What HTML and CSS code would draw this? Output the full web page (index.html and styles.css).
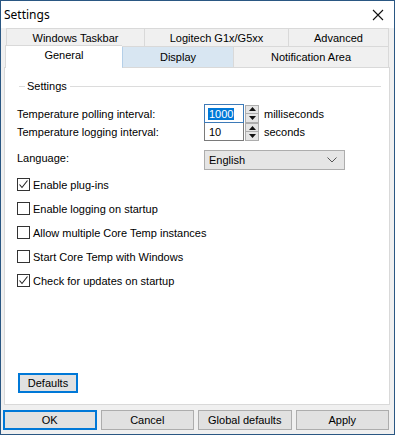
FILE: index.html
```html
<!DOCTYPE html>
<html>
<head>
<meta charset="utf-8">
<link rel="stylesheet" href="styles.css">
</head>
<body>
<div class="window">
  <div class="titlebar">
    <span class="title">Settings</span>
    <svg class="close" width="12" height="12" viewBox="0 0 12 12"><path d="M1 1 L11 11 M11 1 L1 11" stroke="#111" stroke-width="1.1" fill="none"/></svg>
  </div>
  <div class="tabs">
    <div class="tabrow row1">
      <div class="tab w1">Windows Taskbar</div>
      <div class="tab w2">Logitech G1x/G5xx</div>
      <div class="tab w3">Advanced</div>
    </div>
    <div class="tabrow row2">
      <div class="tab sel w4">General</div>
      <div class="tab hover w5">Display</div>
      <div class="tab w6">Notification Area</div>
    </div>
  </div>
  <div class="panel">
    <div class="group"><span class="gl-short"></span><span class="gl-text">Settings</span><span class="gl-long"></span></div>
    <div class="field first">
      <span class="flabel">Temperature polling interval:</span>
      <span class="edit focus"><span class="selected">1000</span></span>
      <span class="spin"><span class="sb"><svg width="7" height="4" viewBox="0 0 7 4"><path d="M0 4 L3.5 0 L7 4Z" fill="#111"/></svg></span><span class="sb"><svg width="7" height="4" viewBox="0 0 7 4"><path d="M0 0 L3.5 4 L7 0Z" fill="#111"/></svg></span></span>
      <span class="unit">milliseconds</span>
    </div>
    <div class="field second">
      <span class="flabel">Temperature logging interval:</span>
      <span class="edit">10</span>
      <span class="spin"><span class="sb"><svg width="7" height="4" viewBox="0 0 7 4"><path d="M0 4 L3.5 0 L7 4Z" fill="#111"/></svg></span><span class="sb"><svg width="7" height="4" viewBox="0 0 7 4"><path d="M0 0 L3.5 4 L7 0Z" fill="#111"/></svg></span></span>
      <span class="unit">seconds</span>
    </div>
    <div class="field lang">
      <span class="flabel">Language:</span>
      <span class="combo"><span>English</span><svg width="10" height="6" viewBox="0 0 10 6"><path d="M0.5 0.5 L5 5 L9.5 0.5" stroke="#555" stroke-width="1" fill="none"/></svg></span>
    </div>
    <div class="checks">
      <div class="check"><span class="box"><svg width="11" height="11" viewBox="0 0 11 11"><path d="M1.5 5.5 L4 8.5 L9.5 1.5" stroke="#222" stroke-width="1.1" fill="none"/></svg></span><span>Enable plug-ins</span></div>
      <div class="check"><span class="box"></span><span>Enable logging on startup</span></div>
      <div class="check"><span class="box"></span><span>Allow multiple Core Temp instances</span></div>
      <div class="check"><span class="box"></span><span>Start Core Temp with Windows</span></div>
      <div class="check"><span class="box"><svg width="11" height="11" viewBox="0 0 11 11"><path d="M1.5 5.5 L4 8.5 L9.5 1.5" stroke="#222" stroke-width="1.1" fill="none"/></svg></span><span>Check for updates on startup</span></div>
    </div>
    <div class="btn defaults focusbtn">Defaults</div>
  </div>
  <div class="buttons">
    <div class="btn focusbtn">OK</div>
    <div class="btn">Cancel</div>
    <div class="btn">Global defaults</div>
    <div class="btn">Apply</div>
  </div>
</div>
</body>
</html>
```

FILE: styles.css
```css
* { box-sizing: border-box; }
html, body { margin: 0; padding: 0; }
body {
  width: 395px;
  height: 435px;
  font-family: "Liberation Sans", Arial, sans-serif;
  font-size: 11px;
  color: #000;
}
.window {
  width: 395px;
  height: 435px;
  border: 1px solid #2a5783;
  background: #f0f0f0;
  display: flex;
  flex-direction: column;
}
.titlebar {
  height: 27px;
  background: #fff;
  display: flex;
  align-items: center;
  justify-content: space-between;
  padding: 0 10px 0 3px;
}
.title {
  font-family: "Noto Sans", "Open Sans", sans-serif;
  font-size: 12px;
  margin-top: -1px;
}
.close { margin-top: 1px; }
.tabs {
  padding: 0 5px 0 4px;
  position: relative;
  z-index: 2;
  margin-bottom: -1px;
}
.tabrow { display: flex; }
.row1 { height: 19px; }
.row2 { height: 21px; align-items: flex-end; }
.tab {
  height: 19px;
  border: 1px solid #d9d9d9;
  border-right: none;
  background: #f0f0f0;
  display: flex;
  align-items: center;
  justify-content: center;
  padding-top: 1px;
}
.tab:last-child { border-right: 1px solid #d9d9d9; }
.row2 .tab { height: 21px; border-top: none; padding-top: 0; padding-bottom: 1px; }
.w1 { width: 138px; margin-left: 1px; }
.w2 { width: 144px; }
.w3 { width: 101px; }
.w4 { width: 117px; }
.w5 { width: 111px; }
.w6 { width: 156px; }
.row2 .tab.sel {
  background: #fff;
  height: 23px;
  margin-top: -2px;
  border: 1px solid #d9d9d9;
  border-bottom: none;
  border-right: none;
  padding-bottom: 4px;
}
.row2 .tab.hover {
  background: #d8e6f2;
  border-left: 1px solid #b4cfe8;
}
.panel {
  height: 338px;
  margin: 0 4px 0 3px;
  background: #fff;
  border: 1px solid #d9d9d9;
  display: flex;
  flex-direction: column;
}
.group {
  margin: 11px 8px 0 14px;
  height: 14px;
  display: flex;
  align-items: center;
}
.gl-short { width: 6px; height: 1px; background: #dcdcdc; }
.gl-long { flex: 1; height: 1px; background: #dcdcdc; }
.gl-text { padding: 0 3px 0 2px; }
.field {
  display: flex;
  align-items: center;
  padding-left: 12px;
}
.flabel { width: 187px; }
.field.first { margin-top: 11px; height: 19px; }
.field.second { height: 18px; }
.edit {
  width: 40px;
  height: 19px;
  border: 1px solid #7a7a7a;
  display: flex;
  align-items: center;
  padding-left: 4px;
}
.edit.focus { border-color: #3d7ab8; }
.second .edit { border-top: none; height: 18px; }
.selected {
  background: #0078d7;
  color: #fff;
  padding: 0 1px;
  margin-left: -1px;
  line-height: 12px;
}
.spin {
  display: flex;
  flex-direction: column;
  margin-left: 1px;
  width: 14px;
}
.sb {
  width: 14px;
  height: 9px;
  border: 1px solid #adadad;
  background: #e5e5e5;
  display: flex;
  align-items: center;
  justify-content: center;
}
.sb + .sb { border-top: none; height: 9px; }
.unit { margin-left: 5px; }
.field.lang { margin-top: 9px; height: 20px; }
.lang .flabel { margin-top: -4px; }
.combo {
  width: 141px;
  height: 20px;
  background: #e5e5e5;
  border: 1px solid #adadad;
  display: flex;
  align-items: center;
  justify-content: space-between;
  padding: 0 7px 0 4px;
}
.checks {
  margin-top: 8px;
  padding-left: 12px;
  display: flex;
  flex-direction: column;
  gap: 11px;
}
.check {
  display: flex;
  align-items: center;
  height: 13px;
}
.box {
  width: 13px;
  height: 13px;
  border: 1px solid #333;
  background: #fff;
  margin-right: 3px;
  display: flex;
  align-items: center;
  justify-content: center;
}
.btn {
  background: #e1e1e1;
  border: 1px solid #adadad;
  display: flex;
  align-items: center;
  justify-content: center;
  height: 20px;
}
.focusbtn { border: 2px solid #0078d7; }
.defaults {
  width: 60px;
  margin: auto 0 11px 13px;
}
.buttons {
  margin: 5px 5px 0 2px;
  display: grid;
  grid-template-columns: repeat(4, 1fr);
  gap: 4px;
}
```
